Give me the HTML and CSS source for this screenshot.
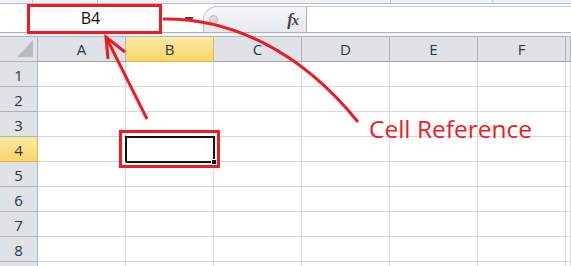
FILE: index.html
```html
<!DOCTYPE html>
<html lang="en">
<head>
  <meta charset="UTF-8">
  <meta name="viewport" content="width=device-width, initial-scale=1">
  <title>Cell Reference</title>
  <link rel="stylesheet" href="styles.css">
</head>
<body>
  <div class="sheet">
    <div class="ribbon-edge">
      <span class="tick t1"></span><span class="tick t2"></span><span class="tick t3"></span><span class="tick t4"></span>
    </div>

    <div class="formula-bar">
      <div class="name-box">B4</div>
      <div class="splitter"><span class="dash"></span></div>
      <div class="fx-pill">
        <span class="knob"></span>
        <span class="fx">f<span class="fx-x">x</span></span>
      </div>
      <div class="formula-input"></div>
    </div>
    <div class="bar-gap"></div>

    <div class="grid">
      <div class="hd corner"><span class="corner-tri"></span></div>
      <div class="hd col">A</div>
      <div class="hd col active">B</div>
      <div class="hd col">C</div>
      <div class="hd col">D</div>
      <div class="hd col">E</div>
      <div class="hd col">F</div>
      <div class="hd col"></div>

      <div class="hd row">1</div><div class="cell"></div><div class="cell"></div><div class="cell"></div><div class="cell"></div><div class="cell"></div><div class="cell"></div><div class="cell"></div>
      <div class="hd row">2</div><div class="cell"></div><div class="cell"></div><div class="cell"></div><div class="cell"></div><div class="cell"></div><div class="cell"></div><div class="cell"></div>
      <div class="hd row">3</div><div class="cell"></div><div class="cell"></div><div class="cell"></div><div class="cell"></div><div class="cell"></div><div class="cell"></div><div class="cell"></div>
      <div class="hd row active">4</div><div class="cell"></div><div class="cell selected"><span class="fill-handle"></span></div><div class="cell"></div><div class="cell"></div><div class="cell"></div><div class="cell"></div><div class="cell"></div>
      <div class="hd row">5</div><div class="cell"></div><div class="cell"></div><div class="cell"></div><div class="cell"></div><div class="cell"></div><div class="cell"></div><div class="cell"></div>
      <div class="hd row">6</div><div class="cell"></div><div class="cell"></div><div class="cell"></div><div class="cell"></div><div class="cell"></div><div class="cell"></div><div class="cell"></div>
      <div class="hd row">7</div><div class="cell"></div><div class="cell"></div><div class="cell"></div><div class="cell"></div><div class="cell"></div><div class="cell"></div><div class="cell"></div>
      <div class="hd row">8</div><div class="cell"></div><div class="cell"></div><div class="cell"></div><div class="cell"></div><div class="cell"></div><div class="cell"></div><div class="cell"></div>
      <div class="hd row"></div><div class="cell"></div><div class="cell"></div><div class="cell"></div><div class="cell"></div><div class="cell"></div><div class="cell"></div><div class="cell"></div>
    </div>

    <!-- annotation layer -->
    <svg class="marks" width="571" height="266" viewBox="0 0 571 266">
      <g fill="none" stroke="#ed1c24" stroke-width="3">
        <rect x="28.5" y="5.5" width="132" height="27"/>
        <rect x="120.5" y="131.5" width="98" height="35"/>
        <path d="M147 119 L106 37"/>
        <path d="M108 59 L106 37 L125 52" stroke-linejoin="miter"/>
        <path d="M163 19 C230 18 300 50 358 122"/>
      </g>
    </svg>
    <div class="callout">Cell Reference</div>
  </div>
</body>
</html>
```

FILE: styles.css
```css
* { box-sizing: border-box; }
body { margin: 0; background: #fff; font-family: "Open Sans", "Liberation Sans", sans-serif; }
.sheet { position: relative; width: 571px; height: 266px; overflow: hidden; background: #fff; }

.ribbon-edge { position: relative; height: 4px; background: #eef1f5; border-bottom: 1px solid #b9c0c8; }
.tick { position: absolute; top: 0; width: 1px; height: 3px; background: #c3c8ce; }
.t1 { left: 32px; } .t2 { left: 97px; } .t3 { left: 390px; } .t4 { left: 492px; }

.formula-bar { display: flex; height: 29px; background: #fff; border-bottom: 1px solid #a9b0b8; }
.name-box { width: 162px; padding-left: 19px; display: flex; align-items: center; justify-content: center; font-size: 16px; color: #111; }
.splitter { width: 41px; padding-left: 12px; display: flex; align-items: center; justify-content: center; }
.dash { width: 8px; height: 2px; background: #4a4a4a; }
.fx-pill { width: 103px; margin-top: 2px; display: flex; align-items: center; justify-content: space-between; padding: 0 8px 0 5px;
  background: linear-gradient(#f6f7f9, #e6e9ed); border: 1px solid #c3c8ce; border-bottom: none; border-right: none; border-radius: 14px 0 0 0; }
.knob { width: 9px; height: 9px; border-radius: 50%; background: #d5d9de; border: 1px solid #b8bdc4; }
.fx { font-family: "Liberation Serif", serif; font-style: italic; font-weight: bold; font-size: 17px; color: #444; letter-spacing: -1px; }
.fx-x { font-size: 14px; }
.formula-input { flex: 1; margin-top: 2px; background: #fff; border-left: 1px solid #a9b0b8; border-top: 1px solid #c3c8ce; }
.bar-gap { height: 4px; background: #f1f3f6; border-bottom: 1px solid #b0b7bf; }

.grid { display: grid; grid-template-columns: 38px repeat(6, 88px) 1fr; grid-auto-rows: 25px; }
.hd { display: flex; align-items: center; justify-content: center; background: #dfe3e8; color: #2a3442;
  font-size: 15px; border-right: 1px solid #adb3ba; border-bottom: 1px solid #adb3ba; }
.hd.col { border-bottom-color: #9da5ae; }
.hd.row { padding-top: 1px; }
.hd.active { background: linear-gradient(#fce9a4, #fad56a); border-color: #e2b24a; color: #2a3442; }
.hd.col.active { border-right-color: #e2b24a; }
.corner { position: relative; }
.corner-tri { position: absolute; right: 4px; bottom: 4px; width: 16px; height: 17px; background: #b6bbc1; clip-path: polygon(100% 0, 100% 100%, 0 100%); }
.cell { position: relative; border-right: 1px solid #d9d9d9; border-bottom: 1px solid #d9d9d9; }
.cell.selected::after { content: ""; position: absolute; left: -1px; top: -1px; right: -2px; bottom: -2px; border: 2px solid #111; }
.fill-handle { position: absolute; right: -4px; bottom: -4px; width: 6px; height: 6px; background: #111; border: 1px solid #fff; z-index: 1; }

.marks { position: absolute; left: 0; top: 0; }
.callout { position: absolute; left: 369px; top: 117px; font-size: 24.5px; line-height: 24px; color: #ed1c24; white-space: nowrap; }
```
